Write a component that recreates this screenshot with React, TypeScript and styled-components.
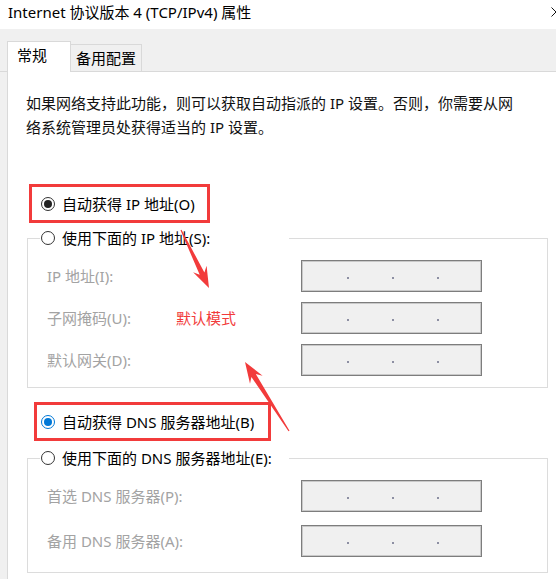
import React from "react";
import styled, { createGlobalStyle } from "styled-components";

const GlobalStyle = createGlobalStyle`
  html, body {
    margin: 0;
    padding: 0;
    background: #fff;
  }
  body {
    font-family: "Noto Sans", "Noto Sans CJK SC", sans-serif;
  }
`;

const RED = "#f23b3b";

const Window = styled.div`
  position: relative;
  width: 556px;
  height: 579px;
  overflow: hidden;
  display: flex;
  flex-direction: column;
  background: #f0f0f0;
`;

const TitleBar = styled.div`
  flex: none;
  height: 29px;
  box-sizing: border-box;
  padding: 0 0 5px 8px;
  background: #fff;
  display: flex;
  align-items: center;
  justify-content: space-between;
  font-size: 15px;
  line-height: 20px;
  color: #000;
`;

const CloseIcon = styled.svg`
  margin-right: -5px;
  flex: none;
`;

const TabStrip = styled.div`
  flex: none;
  height: 43px;
  box-sizing: border-box;
  padding-left: 7px;
  display: flex;
  align-items: flex-end;
  border-bottom: 1px solid #d9d9d9;
`;

const Tab = styled.div<{ $active?: boolean }>`
  box-sizing: border-box;
  display: flex;
  align-items: center;
  font-size: 15px;
  line-height: 20px;
  color: #000;
  border: 1px solid #d9d9d9;
  ${({ $active }) =>
    $active
      ? `
    width: 64px;
    height: 31px;
    margin-bottom: -1px;
    padding: 0 0 4px 9px;
    background: #fff;
    border-bottom: none;
    position: relative;
    z-index: 1;
  `
      : `
    width: 71px;
    height: 27px;
    padding: 0 0 0 5px;
    background: #f0f0f0;
    border-left: none;
    border-bottom: none;
  `}
`;

const Body = styled.div`
  flex: 1;
  display: flex;
  padding-left: 7px;
`;

const Panel = styled.div`
  flex: 1;
  background: #fff;
  border-left: 1px solid #d9d9d9;
  display: flex;
  flex-direction: column;
  align-items: flex-start;
  padding-top: 19px;
`;

const Description = styled.p`
  margin: 0 0 0 18px;
  font-size: 15px;
  line-height: 24px;
  color: #111;
  white-space: nowrap;
`;

const Highlight = styled.div<{ $left: number; $top: number; $width: number; $pad: number }>`
  box-sizing: border-box;
  margin-left: ${({ $left }) => $left}px;
  margin-top: ${({ $top }) => $top}px;
  width: ${({ $width }) => $width}px;
  height: 39px;
  border: 3px solid ${RED};
  padding-left: ${({ $pad }) => $pad}px;
  display: flex;
  align-items: center;
`;

const RadioRow = styled.label`
  display: flex;
  align-items: center;
  gap: 7px;
  font-size: 15px;
  line-height: 20px;
  color: #000;
  white-space: nowrap;
`;

const Radio = styled.span<{ $checked?: boolean; $accent?: string }>`
  flex: none;
  width: 14px;
  height: 14px;
  box-sizing: border-box;
  border-radius: 50%;
  background: #fff;
  border: 1px solid ${({ $checked, $accent }) => ($checked && $accent) || "#333"};
  display: flex;
  align-items: center;
  justify-content: center;
  &::after {
    content: "";
    width: 8px;
    height: 8px;
    border-radius: 50%;
    background: ${({ $accent }) => $accent || "#222"};
    display: ${({ $checked }) => ($checked ? "block" : "none")};
  }
`;

const GroupBox = styled.fieldset<{ $top: number }>`
  box-sizing: border-box;
  margin: ${({ $top }) => $top}px 0 0 19px;
  padding: 0;
  width: 521px;
  border: 1px solid #dcdcdc;
  min-inline-size: 0;
`;

const GroupLegend = styled.legend`
  margin-left: 12px;
  padding: 0 0 0 1px;
  width: 249px;
  box-sizing: border-box;
`;

const Rows = styled.div<{ $bottom: number; $gap: number }>`
  display: flex;
  flex-direction: column;
  gap: ${({ $gap }) => $gap}px;
  padding: 12px 0 ${({ $bottom }) => $bottom}px 19px;
`;

const FieldRow = styled.div`
  display: flex;
  align-items: center;
  height: 32px;
`;

const FieldLabel = styled.span`
  width: 254px;
  flex: none;
  font-size: 15px;
  line-height: 20px;
  color: #a3a3a3;
  white-space: nowrap;
`;

const IpBox = styled.div`
  box-sizing: border-box;
  width: 181px;
  height: 32px;
  background: #f0f0f0;
  border: 1px solid #7d7d7d;
  box-shadow: inset 0 0 0 1px #c9c9c9;
  display: flex;
  align-items: center;
  padding: 4px 0 0 45px;
  gap: 43px;
`;

const Dot = styled.span`
  width: 2px;
  height: 2px;
  background: #8d8fa3;
`;

const Note = styled.span`
  position: absolute;
  left: 176px;
  top: 308px;
  font-size: 15px;
  line-height: 20px;
  color: ${RED};
  white-space: nowrap;
`;

const Overlay = styled.svg`
  position: absolute;
  left: 0;
  top: 0;
  pointer-events: none;
`;

const arrowPoints = (x1: number, y1: number, x2: number, y2: number) => {
  const dx = x2 - x1;
  const dy = y2 - y1;
  const len = Math.hypot(dx, dy);
  const ux = dx / len;
  const uy = dy / len;
  const nx = -uy;
  const ny = ux;
  const at = (d: number, w: number) =>
    `${(x1 + ux * d + nx * w).toFixed(1)},${(y1 + uy * d + ny * w).toFixed(1)}`;
  return [
    at(0, 0.6),
    at(len - 16, 2.6),
    at(len - 21, 7.5),
    at(len, 0),
    at(len - 21, -7.5),
    at(len - 16, -2.6),
    at(0, -0.6),
  ].join(" ");
};

const IpField = ({ label }: { label: string }) => (
  <FieldRow>
    <FieldLabel>{label}</FieldLabel>
    <IpBox>
      <Dot />
      <Dot />
      <Dot />
    </IpBox>
  </FieldRow>
);

export default function App() {
  return (
    <>
      <GlobalStyle />
      <Window>
        <TitleBar>
          <span>Internet 协议版本 4 (TCP/IPv4) 属性</span>
          <CloseIcon width="10" height="10" viewBox="0 0 10 10">
            <path d="M0.5 0.5 L9.5 9.5 M9.5 0.5 L0.5 9.5" stroke="#111" strokeWidth="1" fill="none" />
          </CloseIcon>
        </TitleBar>
        <TabStrip>
          <Tab $active>常规</Tab>
          <Tab>备用配置</Tab>
        </TabStrip>
        <Body>
          <Panel>
            <Description>
              如果网络支持此功能，则可以获取自动指派的 IP 设置。否则，你需要从网
              <br />
              络系统管理员处获得适当的 IP 设置。
            </Description>

            <Highlight $left={21} $top={45} $width={181} $pad={9}>
              <RadioRow>
                <Radio $checked />
                自动获得 IP 地址(O)
              </RadioRow>
            </Highlight>

            <GroupBox $top={5}>
              <GroupLegend>
                <RadioRow>
                  <Radio />
                  使用下面的 IP 地址(S):
                </RadioRow>
              </GroupLegend>
              <Rows $gap={10} $bottom={11}>
                <IpField label="IP 地址(I):" />
                <IpField label="子网掩码(U):" />
                <IpField label="默认网关(D):" />
              </Rows>
            </GroupBox>

            <Highlight $left={26} $top={14} $width={237} $pad={4}>
              <RadioRow>
                <Radio $checked $accent="#0078d7" />
                自动获得 DNS 服务器地址(B)
              </RadioRow>
            </Highlight>

            <GroupBox $top={7}>
              <GroupLegend>
                <RadioRow>
                  <Radio />
                  使用下面的 DNS 服务器地址(E):
                </RadioRow>
              </GroupLegend>
              <Rows $gap={13} $bottom={15}>
                <IpField label="首选 DNS 服务器(P):" />
                <IpField label="备用 DNS 服务器(A):" />
              </Rows>
            </GroupBox>
          </Panel>
        </Body>

        <Note>默认模式</Note>
        <Overlay width="556" height="579" viewBox="0 0 556 579">
          <polygon points={arrowPoints(181, 230, 209, 288)} fill={RED} />
          <polygon points={arrowPoints(289, 431, 245, 362)} fill={RED} />
        </Overlay>
      </Window>
    </>
  );
}
